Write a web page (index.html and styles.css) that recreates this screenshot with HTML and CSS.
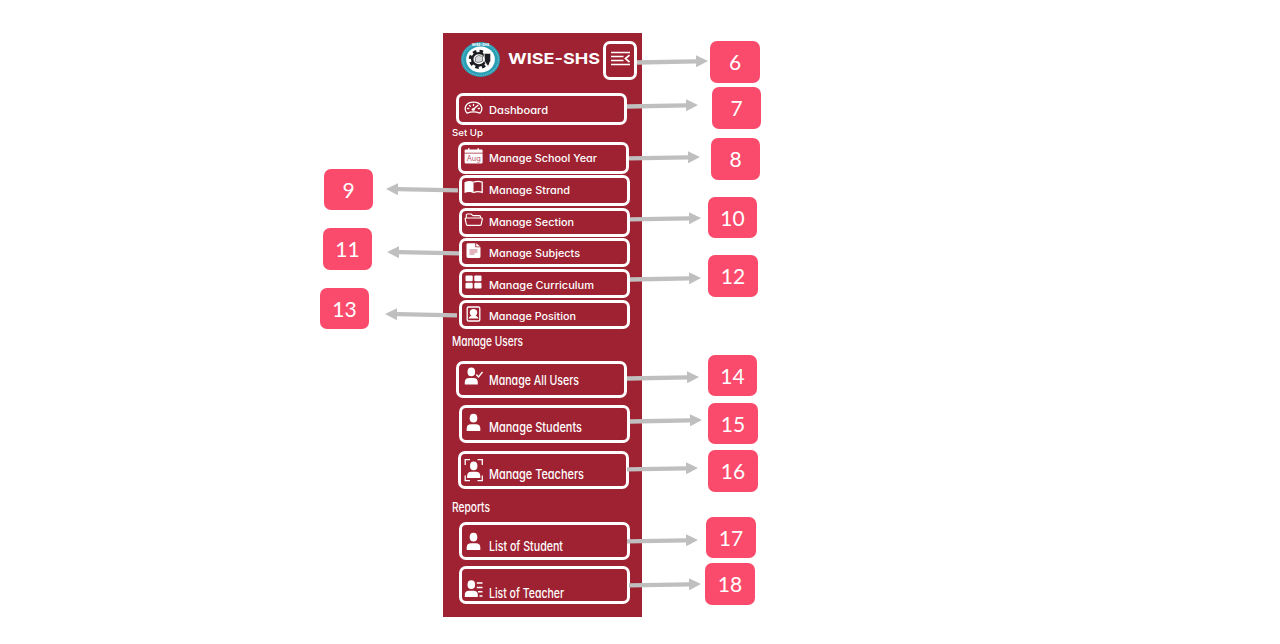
FILE: index.html
```html
<!DOCTYPE html>
<html lang="en">
<head>
<meta charset="utf-8">
<title>WISE-SHS navigation guide</title>
<link rel="stylesheet" href="styles.css">
</head>
<body>
<main class="canvas">
  <nav class="sidebar">
    <header class="brand">
      <svg class="logo" viewBox="0 0 38 34">
        <ellipse cx="19" cy="17" rx="19" ry="17" fill="#2a9fb4"/>
        <ellipse cx="19" cy="17" rx="17.3" ry="15.3" fill="none" stroke="#6fc0ce" stroke-width="1" stroke-dasharray="1.2 1"/>
        <ellipse cx="19" cy="17" rx="14" ry="12.6" fill="#fff"/>
        <ellipse cx="17.500" cy="16.800" rx="8" ry="7.400" fill="none" stroke="#1c1d22" stroke-width="4" stroke-dasharray="3.2 2.9"/>
        <ellipse cx="17.500" cy="16.800" rx="6.600" ry="6" fill="#fff" stroke="#1c1d22" stroke-width="2.400"/>
        <path d="M14 15l3-2 4 1v4.500l-4 1.500-3-1z" fill="#d5d8da" stroke="#666" stroke-width=".8"/>
        <path d="M22.500 11h6.500v7l-2.500 6-3.500-5z" fill="#1c1d22" stroke="#fff" stroke-width=".8"/>
        <text class="seal" x="19" y="3.900" textLength="17" lengthAdjust="spacingAndGlyphs">WISE-SHS</text>
      </svg>
      <svg class="title" width="92" height="16"><text y="12" textLength="92" lengthAdjust="spacingAndGlyphs">WISE-SHS</text></svg>
      <span class="toggle">
        <svg width="20" height="16" fill="none" stroke="#fff" stroke-width="1.400"><path d="M0 1.500h19M0 5.500h12.500M0 9.500h12.500M0 13.500h19"/><path d="M18.500 4.200l-4 3.400 4 3.400" stroke-width="1.700"/></svg>
      </span>
    </header>

    <a class="item dashboard">
      <svg class="icon" viewBox="0 0 20 20" fill="none" stroke="#fff" stroke-width="1.300" stroke-linecap="round" stroke-linejoin="round"><path d="M3 12.200C-.5 8 1 1.200 9.500 1.200S19.500 8 16 12.200c-4-1.600-9-1.600-13 0zM3.500 7.500h1.300M5.500 4.500l.8.7M9.500 3.500v1M15.500 7.500h-1.200M9 8.500l5-4.300"/><ellipse cx="9.300" cy="8.500" rx="1.700" ry="1.200" fill="#fff" stroke="none"/></svg>
      <svg class="label wide" width="59"><text y="12" textLength="59" lengthAdjust="spacingAndGlyphs">Dashboard</text></svg>
    </a>

    <svg class="heading set-up wide" width="31"><text y="12" textLength="31" lengthAdjust="spacingAndGlyphs">Set Up</text></svg>
    <a class="item year">
      <svg class="icon" viewBox="0 0 20 20"><path d="M.6 4.700V2.500q0-1 1-1H4V.3h1.500v1.200h8V.3H15v1.200h2.600q1 0 1 1v2.200zM.6 5.600h18v8.700q0 1.300-1.300 1.300H2Q.6 15.600.6 14.200z" fill="#fff"/><text class="month" x="9.700" y="12.500" textLength="14" lengthAdjust="spacingAndGlyphs">Aug</text></svg>
      <svg class="label wide" width="108"><text y="12" textLength="108" lengthAdjust="spacingAndGlyphs">Manage School Year</text></svg>
    </a>
    <a class="item strand">
      <svg class="icon" viewBox="0 0 20 20"><path d="M.5 2.200Q5.500 0 9.500 1.800v11.400Q5.500 11 .5 13z" fill="#fff"/><path d="M9.500 2.200Q14 .5 18.200 2.200v10.100q-4.700-1.500-8.700.3" fill="none" stroke="#fff" stroke-width="1.300"/></svg>
      <svg class="label wide" width="81"><text y="12" textLength="81" lengthAdjust="spacingAndGlyphs">Manage Strand</text></svg>
    </a>
    <a class="item section">
      <svg class="icon" viewBox="0 0 20 20" fill="none" stroke="#fff" stroke-width="1.200" stroke-linejoin="round"><path d="M2.300 5V2.200Q2.300 1 3.500 1H7l2 1.600h6.300q1.200 0 1.200 1.200V5M2.300 5h15q1.100 0 1 1l-1 5.200q-.2 1.200-1.200 1.200H3.500q-1 0-1.200-1.200L1.200 6Q1.100 5 2.300 5z"/></svg>
      <svg class="label wide" width="85"><text y="12" textLength="85" lengthAdjust="spacingAndGlyphs">Manage Section</text></svg>
    </a>
    <a class="item subjects">
      <svg class="icon" viewBox="0 0 20 20"><path d="M4 1.200h7.300v4.100h5.200v9.300q0 1.400-1.300 1.400H4q-1.500 0-1.500-1.400v-12Q2.500 1.200 4 1.200zM12.200 1.200l4.100 3.300h-4.100z" fill="#fff"/><path d="M5.500 8h8M5.500 10h8M5.500 12h5" stroke="#c4697a"/></svg>
      <svg class="label wide" width="91"><text y="12" textLength="91" lengthAdjust="spacingAndGlyphs">Manage Subjects</text></svg>
    </a>
    <a class="item curriculum">
      <svg class="icon" viewBox="0 0 20 20" fill="#fff"><rect x="1.500" y=".5" width="7.200" height="5.800" rx="1"/><rect x="10.300" y=".5" width="7.200" height="5.800" rx="1"/><rect x="1.500" y="7.700" width="7.200" height="5.800" rx="1"/><rect x="10.300" y="7.700" width="7.200" height="5.800" rx="1"/></svg>
      <svg class="label wide" width="105"><text y="12" textLength="105" lengthAdjust="spacingAndGlyphs">Manage Curriculum</text></svg>
    </a>
    <a class="item position">
      <svg class="icon" viewBox="0 0 20 20"><rect x="3.200" y="1" width="12.600" height="14" rx="1.300" fill="none" stroke="#fff" stroke-width="1.300"/><ellipse cx="9.500" cy="6.600" rx="3.700" ry="3.600" fill="#fff"/><path d="M4.500 12.600q1-3 5-3t5 3z" fill="#fff"/></svg>
      <svg class="label wide" width="87"><text y="12" textLength="87" lengthAdjust="spacingAndGlyphs">Manage Position</text></svg>
    </a>

    <svg class="heading users tall" width="71"><text y="12" textLength="71" lengthAdjust="spacingAndGlyphs">Manage Users</text></svg>
    <a class="item all-users">
      <svg class="icon" viewBox="0 0 20 20"><ellipse cx="7.300" cy="4.900" rx="3.800" ry="4.400" fill="#fff"/><path d="M.8 17.500V15.300q0-4.300 4.500-4.300h4q4.500 0 4.500 4.300v2.200z" fill="#fff"/><path d="M12.300 7.500l2.200 2.500L18.500 5" fill="none" stroke="#fff" stroke-width="1.400"/></svg>
      <svg class="label tall" width="90"><text y="12" textLength="90" lengthAdjust="spacingAndGlyphs">Manage All Users</text></svg>
    </a>
    <a class="item students">
      <svg class="icon" viewBox="0 0 20 20" fill="#fff"><ellipse cx="9.500" cy="5.200" rx="3.800" ry="4.400"/><path d="M2.700 18v-2.500q0-4.200 4.500-4.200h4.600q4.500 0 4.500 4.200V18z"/></svg>
      <svg class="label tall" width="93"><text y="12" textLength="93" lengthAdjust="spacingAndGlyphs">Manage Students</text></svg>
    </a>
    <a class="item teachers">
      <svg class="icon tall-icon" viewBox="0 0 20 24"><path d="M1.200 7V1.600H6M13.500 1.600h4.800V7M1.200 17.500v5.200H6M13.500 22.700h4.800v-5.200" fill="none" stroke="#fff" stroke-width="1.300"/><ellipse cx="9.700" cy="7.900" rx="3.700" ry="4.400" fill="#fff"/><path d="M3.100 20v-2q0-4.300 4.500-4.300h4.200q4.500 0 4.500 4.300v2z" fill="#fff"/></svg>
      <svg class="label tall" width="95"><text y="12" textLength="95" lengthAdjust="spacingAndGlyphs">Manage Teachers</text></svg>
    </a>

    <svg class="heading reports tall" width="38"><text y="12" textLength="38" lengthAdjust="spacingAndGlyphs">Reports</text></svg>
    <a class="item list-student">
      <svg class="icon" viewBox="0 0 20 20" fill="#fff"><ellipse cx="9.500" cy="5.200" rx="3.800" ry="4.400"/><path d="M2.700 18v-2.500q0-4.200 4.500-4.200h4.600q4.500 0 4.500 4.200V18z"/></svg>
      <svg class="label tall" width="74"><text y="12" textLength="74" lengthAdjust="spacingAndGlyphs">List of Student</text></svg>
    </a>
    <a class="item list-teacher">
      <svg class="icon" viewBox="0 0 20 20"><ellipse cx="7.300" cy="5.700" rx="3.800" ry="4.400" fill="#fff"/><path d="M.8 18v-2.300q0-4 4.500-4h4q4.500 0 4.500 4V18z" fill="#fff"/><path d="M12.800 4h5.700M12.800 8.500h5.700M14 12.700h4.500M15.500 17h3" stroke="#fff" stroke-width="1.500"/></svg>
      <svg class="label tall" width="75"><text y="12" textLength="75" lengthAdjust="spacingAndGlyphs">List of Teacher</text></svg>
    </a>
  </nav>

  <svg class="arrows" viewBox="0 0 1280 644">
    <defs><marker id="head" viewBox="0 0 12 12" refX="0" refY="6" markerWidth="12" markerHeight="12" markerUnits="userSpaceOnUse" orient="auto"><path d="M0 0l12 6-12 6z" fill="#bfbfbf"/></marker></defs>
    <path d="M637 62.500L696 61.300"/>
    <path d="M627 106.500L686 105.300"/>
    <path d="M629 158.300L688 157.300"/>
    <path d="M630 219.300L689 218.300"/>
    <path d="M630 279.500L689 278.300"/>
    <path d="M627 378.500L687 377.300"/>
    <path d="M630 421.500L690 420.300"/>
    <path d="M627 469.300L686 468.300"/>
    <path d="M627 541.300L686 540.300"/>
    <path d="M629 585.300L689 584.300"/>
    <path d="M458 190.300L398 189.200"/>
    <path d="M459 253.300L399 252.200"/>
    <path d="M457 315.300L397 314.200"/>
  </svg>

  <span class="badge b6">6</span>
  <span class="badge b7">7</span>
  <span class="badge b8">8</span>
  <span class="badge b9">9</span>
  <span class="badge b10">10</span>
  <span class="badge b11">11</span>
  <span class="badge b12">12</span>
  <span class="badge b13">13</span>
  <span class="badge b14">14</span>
  <span class="badge b15">15</span>
  <span class="badge b16">16</span>
  <span class="badge b17">17</span>
  <span class="badge b18">18</span>
</main>
</body>
</html>
```
FILE: styles.css
```css
* { box-sizing: border-box; }
body { margin: 0; background: #fff; }
.canvas {
  position: relative;
  width: 1280px;
  height: 644px;
  padding: 33px 0 0 443px;
  overflow: hidden;
  font-family: Inter, "Open Sans", sans-serif;
}
.sidebar {
  display: flex;
  flex-direction: column;
  align-items: flex-start;
  width: 199px;
  height: 584px;
  background: #9e2232;
}
svg { display: block; flex: none; overflow: visible; }
svg text { fill: #fff; font-feature-settings: "cv11", "ss03"; }

/* Brand row */
.brand { display: flex; padding: 8px 0 0 18px; }
.logo { width: 39px; height: 35px; margin-top: 1px; }
svg .seal { font-size: 4px; font-weight: 700; text-anchor: middle; }
.title { margin: 11px 0 0 8px; font-size: 15px; font-weight: 650; }
.toggle {
  width: 34px;
  height: 39px;
  margin-left: 3px;
  padding: 7px 0 0 5px;
  border: 3px solid #fff;
  border-radius: 7px;
}

/* Menu entries */
.item {
  display: flex;
  align-items: flex-start;
  gap: 5px;
  width: 171px;
  height: 38px;
  margin-left: 16px;
  padding-left: 2px;
  border: 3px solid #fff;
  border-radius: 7px;
}
.icon { width: 20px; height: 20px; }
.tall-icon { height: 24px; }
.label, .heading { height: 16px; }
.wide { font-size: 10px; font-weight: 450; }
.tall { font-size: 13px; font-weight: 450; }
.heading { margin-left: 9px; }
svg .month { fill: #b35164; font-size: 7px; text-anchor: middle; }

.dashboard { height: 32px; margin: 12px 0 0 13px; padding-left: 5px; }
.brand { height: 48px; }
.dashboard .icon { margin-top: 5px; }
.dashboard .label { margin-top: 6px; }
.set-up { margin-top: -1px; font-size: 9px; }
.year { height: 32px; margin: 2px 0 0 15px; padding-left: 3px; }
.year .icon { margin-top: 3px; }
.year .label { margin-top: 5px; }
.strand { height: 31px; margin-top: 1px; }
.strand .icon { margin-top: 2px; }
.strand .label { margin-top: 4px; }
.section { height: 29px; margin-top: 2px; }
.section .icon { margin-top: 2px; }
.section .label { margin-top: 3px; }
.subjects { height: 29px; margin-top: 1px; }
.subjects .icon { margin-top: 1px; }
.subjects .label { margin-top: 4px; }
.curriculum { height: 29px; margin-top: 2px; }
.curriculum .icon { margin-top: 3px; }
.curriculum .label { margin-top: 5px; }
.position { height: 29px; margin-top: 2px; }
.position .icon { margin-top: 3px; }
.position .label { margin-top: 5px; }
.users { margin-top: 5px; }
.all-users { height: 37px; margin: 11px 0 0 13px; padding-left: 5px; }
.all-users .icon { margin-top: 3px; }
.all-users .label { margin-top: 9px; }
.students { margin-top: 7px; }
.students .icon { margin-top: 5px; }
.students .label { margin-top: 12px; }
.teachers { margin: 8px 0 0 15px; padding-left: 3px; }
.teachers .icon { margin-top: 4px; }
.teachers .label { margin-top: 13px; }
.reports { margin-top: 11px; }
.list-student { margin-top: 6px; }
.list-student .icon { margin-top: 7px; }
.list-student .label { margin-top: 14px; }
.list-teacher { margin-top: 6px; }
.list-teacher .icon { margin-top: 10px; }
.list-teacher .label { margin-top: 17px; }

/* Callouts placed freely around the sidebar */
.arrows { position: absolute; left: 0; top: 0; width: 1280px; height: 644px; }
.arrows > path { fill: none; stroke: #bfbfbf; stroke-width: 4.3; marker-end: url(#head); }
.badge {
  position: absolute;
  display: flex;
  align-items: center;
  justify-content: center;
  width: 50px;
  height: 42px;
  border-radius: 7px;
  background: #fb4b6c;
  color: #fff;
  font: 21px/28px Lato, "Open Sans", sans-serif;
}
.b6 { left: 710px; top: 41px; }
.b7 { left: 712px; top: 87px; width: 49px; }
.b8 { left: 711px; top: 138px; width: 49px; }
.b9 { left: 324px; top: 169px; width: 49px; height: 41px; }
.b10 { left: 708px; top: 197px; width: 49px; height: 41px; }
.b11 { left: 323px; top: 228px; width: 49px; }
.b12 { left: 708px; top: 255px; }
.b13 { left: 320px; top: 288px; width: 49px; height: 41px; }
.b14 { left: 708px; top: 355px; width: 49px; height: 41px; }
.b15 { left: 708px; top: 403px; height: 41px; }
.b16 { left: 708px; top: 450px; }
.b17 { left: 706px; top: 517px; height: 41px; }
.b18 { left: 705px; top: 563px; }
```
